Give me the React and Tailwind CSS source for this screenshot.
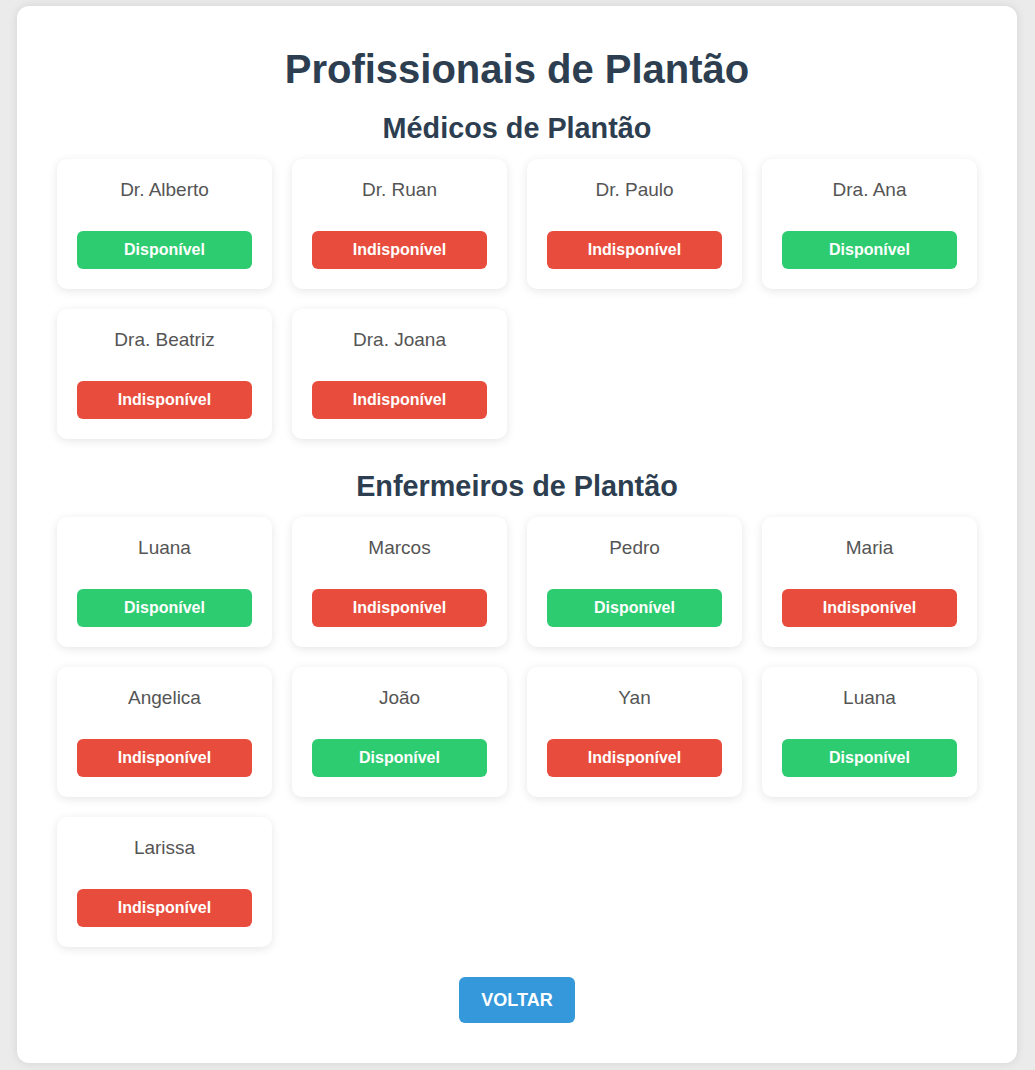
import React from 'react';

const medicos = [
  { nome: 'Dr. Alberto', ok: true },
  { nome: 'Dr. Ruan', ok: false },
  { nome: 'Dr. Paulo', ok: false },
  { nome: 'Dra. Ana', ok: true },
  { nome: 'Dra. Beatriz', ok: false },
  { nome: 'Dra. Joana', ok: false },
];

const enfermeiros = [
  { nome: 'Luana', ok: true },
  { nome: 'Marcos', ok: false },
  { nome: 'Pedro', ok: true },
  { nome: 'Maria', ok: false },
  { nome: 'Angelica', ok: false },
  { nome: 'João', ok: true },
  { nome: 'Yan', ok: false },
  { nome: 'Luana', ok: true },
  { nome: 'Larissa', ok: false },
];

const Card = ({ nome, ok }) => (
  <div className="bg-white rounded-[10px] p-5 shadow-[0_2px_10px_rgba(0,0,0,0.1)] text-center">
    <p className="text-[19px] leading-[21px] text-[#555]">{nome}</p>
    <div
      className={`mt-[31px] h-[38px] rounded-[6px] flex items-center justify-center text-white font-bold text-[16px] ${
        ok ? 'bg-[#2ecc71]' : 'bg-[#e74c3c]'
      }`}
    >
      {ok ? 'Disponível' : 'Indisponível'}
    </div>
  </div>
);

const Secao = ({ titulo, lista }) => (
  <section>
    <h2 className="text-[28.8px] leading-[32px] font-bold text-[#2c3e50] text-center mb-[15px]">{titulo}</h2>
    <div className="grid grid-cols-4 gap-5">
      {lista.map((p, i) => (
        <Card key={i} {...p} />
      ))}
    </div>
  </section>
);

export default function App() {
  return (
    <div className="min-h-screen bg-[#ebebeb] pt-[6px] pb-[8px]" style={{ fontFamily: '"Liberation Sans", Arial, sans-serif' }}>
      <div className="w-[1000px] ml-[17px] bg-white rounded-[12px] shadow-[0_0_10px_rgba(0,0,0,0.1)] px-10 pt-[40px] pb-[40px]">
        <h1 className="text-[40px] leading-[46px] font-bold text-[#2c3e50] text-center mb-[20px]">Profissionais de Plantão</h1>
        <Secao titulo="Médicos de Plantão" lista={medicos} />
        <div className="mt-[31px]">
          <Secao titulo="Enfermeiros de Plantão" lista={enfermeiros} />
        </div>
        <div className="flex justify-center mt-[30px]">
          <button className="bg-[#3498db] text-white font-bold text-[18px] leading-[22px] px-[22px] py-3 rounded-[6px]">VOLTAR</button>
        </div>
      </div>
    </div>
  );
}
